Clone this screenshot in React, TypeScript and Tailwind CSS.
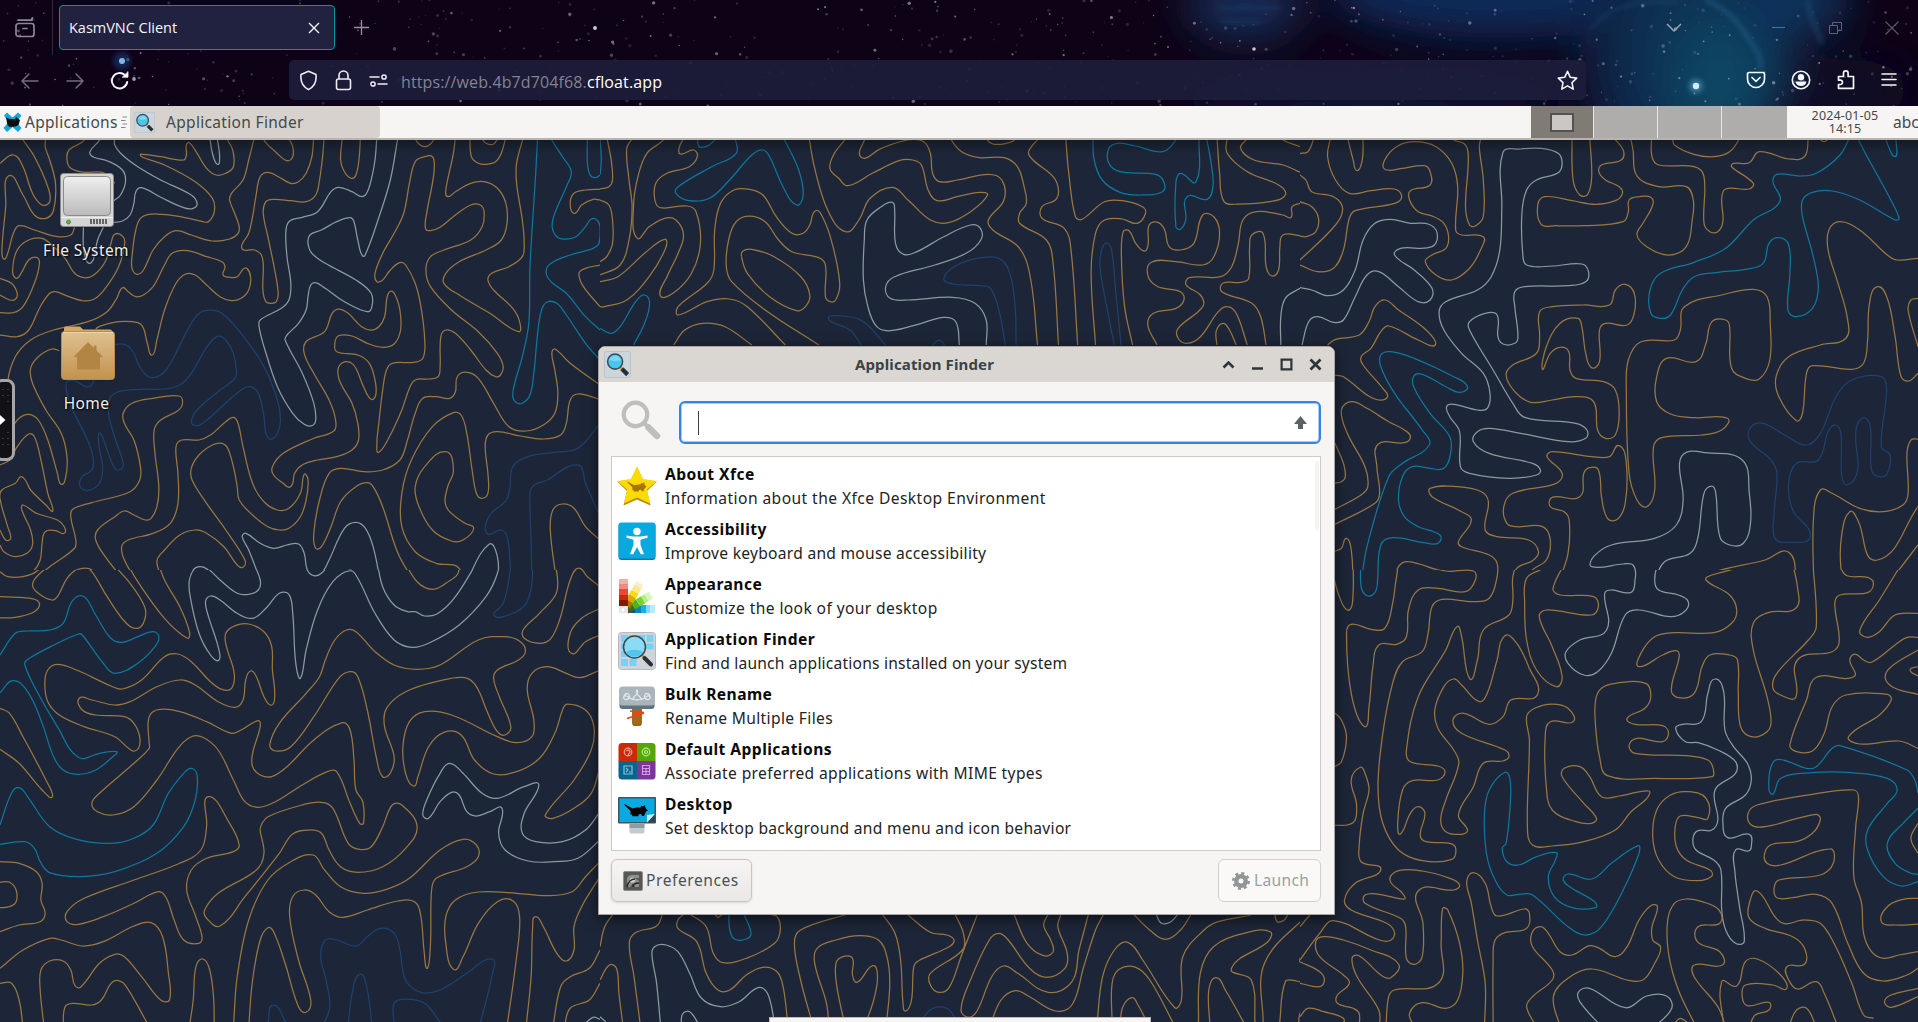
import React from "react";

type Tone = "o" | "c" | "w" | "b";
const tones: Record<Tone, string> = { o: "#9a7641", c: "#0f769d", w: "#8a9a9f", b: "#1d426e" };

type Region = {
  id: string;
  ox: number;
  oy: number;
  sx: number;
  clip: [number, number, number, number];
  lines: string[];
};

const topLeft: string[] = [
  "o 0,70 35,45 60,80 85,160 110,195 130,185 125,140 90,50 60,0 50,-20",
  "o 120,-10 118,20 130,60 145,130 140,210 120,235 90,225 60,165 22,108 15,200 5,330 10,357 20,340 35,280 50,257 90,270 150,290 185,285 195,262",
  "o 220,0 180,30 175,60 185,85 220,97 270,98 300,130",
  "w 260,0 235,35 245,52 280,62 320,90 328,125 315,165 298,182",
  "w 300,-10 300,15 320,45 360,80 420,120 500,165 515,190 505,205 480,203 420,172 370,143 355,155 350,190 340,225 320,243 298,247",
  "w 218,262 218,320 225,360 235,370 245,355 255,300 270,262",
  "o 0,518 35,518 60,500 90,430 103,370 95,352 75,360 55,400 42,415 33,390 45,330 75,300 110,295 140,320 170,355 195,400 220,413 245,405 275,365 290,310 300,283 320,288 326,310 310,380 275,445 245,478 215,482 180,470 145,455 130,460 105,500 75,570 45,590 0,585",
  "o 0,415 30,430 45,460 40,478 25,480 0,465",
  "o 0,905 15,860 20,725 40,650 80,600 140,570 230,545 280,515 305,475 320,443 335,455 355,470 375,465 400,440 430,375 450,340 490,332 540,350 580,365 588,380 583,405 600,412 620,410 635,388 645,385 655,410 650,450 630,475 605,482 575,470 540,435 510,405 485,402 460,430 430,510 410,600 398,645 385,610 375,565 360,548 310,545 265,557 250,566",
  "o 590,-10 608,30 610,80 590,100 565,105 540,85 515,40 495,8 487,15 487,45 480,60 420,50 368,42 370,50 430,75 510,125 555,175 560,215 545,245 530,245 480,232 410,222 370,232 355,270 345,350 345,385 358,403 375,390 400,330 430,290 460,272 500,285 555,303 600,297 622,280 625,260 615,225 600,180 605,160 635,120 650,60 665,-10",
  "w 548,-10 555,40 568,73 574,50 568,-5",
  "o 690,0 720,35 750,62 765,50 765,20 755,-5",
  "o 820,-10 815,50 800,100 780,125 760,130 730,112 700,97 680,110 670,160 660,230 650,280 632,325 665,330 683,345 688,380 687,450 695,485 710,490 722,485 727,460 718,390 700,290 688,220 695,185 715,178 760,182 800,185 825,165 835,120 843,50 847,-10",
  "o 895,-10 890,60 900,95 918,115 930,105 938,60 942,-10",
  "w 985,-10 980,60 970,120 958,160 945,170 920,155 885,142 865,155 830,215 790,232 755,245 747,280 750,350 760,430 755,480 735,505 680,540 677,560 690,620 725,740 765,820 795,853 815,857 825,840 820,790 790,700 745,600 750,585 780,550 800,510 805,470 812,435 825,428 850,445 900,485 960,515 972,500 970,460 930,420 850,370 815,340 805,310 810,285 840,270 880,245 915,233 925,245 935,300 948,348 960,330 985,250 1020,120 1040,-10",
  "oz 985,425 980,400 1000,340 1030,280 1055,220 1070,130 1085,65 1110,50 1130,50 1135,80 1130,130 1115,220 1112,265 1125,272 1150,262 1190,225 1230,195 1255,195 1265,215 1260,260 1230,300 1160,330 1125,350 1113,390 1125,440 1180,510 1250,575 1300,640 1315,680 1308,705 1295,710 1270,690 1230,630 1190,580 1165,570 1152,590 1150,680 1145,710 1120,717 1085,720 1070,745 1050,810 1020,885 990,937 985,910 990,850 1000,750 1010,690 1025,670 1080,667 1105,655 1110,600 1100,500 1085,430 1060,375 1045,368 1020,390 1000,420",
  "o 1085,-5 1095,12 1110,20 1125,12 1135,-5",
  "o 1190,-10 1185,40 1165,150 1170,170 1190,155 1230,130 1265,125 1300,145 1322,190 1325,250 1310,300 1270,330 1200,365 1165,400 1160,430 1200,465 1280,520 1355,575 1358,545 1340,505 1290,450 1275,420 1285,400 1330,380 1365,350 1370,310 1365,240 1350,130 1350,70 1368,-10",
  "o 1228,-10 1232,50 1250,70 1270,73 1295,65 1310,40 1322,-10",
  "o 1260,-5 1270,10 1290,12 1300,-5",
  "c 1405,-10 1400,100 1385,380 1382,550 1365,650 1345,730 1340,770 1350,788 1365,790 1385,765 1395,700 1405,580 1415,510 1430,486 1455,490 1480,525 1530,610 1568,660",
  "c 1440,-5 1470,50 1493,95 1480,140 1450,220 1443,260 1455,290 1475,297 1505,290 1530,260 1545,237 1560,240 1568,260 1565,310 1550,325 1490,345 1440,370 1427,395 1440,425 1480,460 1530,530 1568,570",
  "c 1535,-10 1535,70 1542,105 1555,113 1568,105",
  "o 1568,180 1550,178 1520,195 1500,220 1490,190 1500,160 1530,150 1568,148",
  "o 1568,375 1530,385 1513,400 1525,440 1568,500",
  "oz 800,605 795,640 820,700 860,780 877,840 873,872 820,895 740,940 712,980 715,1005 740,1030 755,1042 765,1030 770,1000 790,975 830,960 880,950 920,930 937,900 935,850 920,790 890,730 883,690 895,668 915,667 930,685 950,740 970,778 982,765 980,720 965,670 935,645 880,635 875,610 885,587 920,588 960,610 1000,622 1030,612 1047,570 1045,510 1035,470 1022,453 1012,470 1005,530 990,560 970,570 945,560 910,520 885,507 868,520 848,575",
  "b 300,613 325,613 345,630 365,680 385,708 405,712 430,695 455,650 490,570 520,520 550,510 580,520 630,580 690,680 725,780 733,840 725,880 708,898 695,880 690,830 675,760 655,740 630,750 570,810 530,850 510,857 500,845 515,810 570,755 610,720 618,700 610,640 590,600 572,588 555,600 530,640 500,700 470,735 430,747 370,748 310,755 285,780 285,830 305,910 322,970 315,988 300,985 280,930 262,880 258,910 268,980 262,1025 240,1048 220,1050 208,1035 215,1010 240,990 243,950 225,890 190,810 175,760 175,725 195,722 225,740 240,735 245,718",
  "o 155,632 135,627 100,650 80,685 85,730 120,810 160,880 175,950 172,1010 160,1033 150,1000 125,900 100,840 75,823 50,835 20,880 0,905",
  "o 0,975 25,960 45,920 75,882 90,890 105,950 125,1060 138,1112 120,1095 80,1050 57,1010 40,1030 5,1050 0,1075 20,1160 28,1195 15,1200 0,1170",
  "o 0,1300 45,1312 85,1295 105,1260 110,1210 118,1175 145,1172 168,1180 168,1160 150,1140 95,1120 60,1095 57,1110 80,1170 85,1215 70,1240 40,1250 10,1235 0,1215",
  "o 90,1320 130,1280 195,1225 198,1200 185,1130 190,1108 240,1088 340,1055 365,1020 367,980 350,900 325,850 322,820 345,790 400,775 468,768 477,790 465,812 420,840 403,870 405,940 415,1040 410,1100 395,1135 380,1140 350,1125 325,1113 300,1130 255,1170 250,1200 275,1250 330,1330",
  "o 360,1330 325,1260 318,1220 335,1200 400,1180 445,1150 465,1090 465,1000 460,920 475,900 520,900 550,885 590,845 610,832 622,850 635,920 660,1030 690,1085 725,1110 755,1105 785,1060 795,1003 805,1020 800,1080 785,1130 755,1165 730,1170 700,1160 660,1125 625,1080 620,1040 610,980 595,925 580,910 555,915 520,945 500,985 502,1020 540,1090 590,1170 640,1260 635,1282 620,1275 585,1220 540,1180 510,1170 470,1185 430,1230 410,1265 430,1330",
  "o 170,1330 185,1300 215,1285 240,1290 260,1330",
  "w 495,1330 505,1290 525,1280 550,1295 580,1330",
  "w 680,1320 650,1230 633,1190 643,1180 680,1210 715,1225 750,1215 780,1212 795,1240 803,1290 820,1308 840,1300 860,1260 900,1165 930,1147 955,1165 975,1220 995,1330",
  "o 1085,1330 1040,1240 1000,1100 975,1040 960,1028 930,1040 890,1085 865,1160 840,1220 825,1225 820,1180 835,1080 860,1000 890,985 950,995 1000,990 1045,960 1065,900 1085,820 1105,775 1140,770 1175,775 1190,755 1195,710 1220,697 1250,715 1290,790 1330,860 1375,873 1420,855 1450,820 1458,760 1450,690 1442,640 1450,627 1490,670 1568,735",
  "o 1180,1325 1200,1285 1140,1270 1085,1235 1050,1160 1050,1060 1075,960 1130,860 1185,818 1205,825 1220,880 1235,1000 1245,1060 1258,1075 1275,1060 1275,1000 1268,920 1275,885 1300,875 1360,888 1420,897 1465,885 1480,850 1490,780 1510,762 1568,778",
  "oz 1165,935 1110,980 1085,1040 1095,1100 1130,1170 1180,1203 1210,1200 1238,1165 1215,1150 1175,1115 1163,1085 1170,1040 1185,990",
  "b 1568,850 1510,925 1450,937 1380,950 1340,980 1332,1050 1320,1085 1280,1125 1272,1180 1310,1170 1325,1190 1332,1250 1335,1330",
  "b 1390,1330 1388,1200 1385,1090 1390,1042 1430,1020 1510,975 1530,1030 1568,1130",
  "o 1568,1200 1530,1160 1500,1105 1470,1092 1445,1110 1438,1170 1455,1330",
  "o 1495,1330 1510,1285 1540,1320",
  "w 1220,1320 1278,1213 1300,1250 1302,1330",
  "w 880,1320 915,1290 935,1320",
];

const bottomLeft: string[] = [
  "o 0,35 20,50 60,50 100,30 105,0 104,-20",
  "o 150,0 100,45 85,75 100,100 135,120 150,110 175,55 200,28 220,22 240,35 280,110 330,190 360,205 378,180 378,140 340,70 280,-5",
  "o 325,-5 360,65 430,175 490,235 495,215 470,140 430,60 408,-10",
  "o 0,110 60,113 95,120 103,137 85,158 40,172 0,174",
  "c 0,285 40,220 70,213 130,210 165,190 185,130 205,108 225,115 250,165 290,235 320,247 360,230 400,215 415,230 405,260 360,310 300,340 270,310 215,225 205,222 150,250 70,300 65,315 90,380 150,500 205,592 260,580 305,575 295,590 250,630 205,643 165,630 140,590 110,490 75,400 35,362 0,398",
  "o 0,445 25,460 60,530 120,660 137,710 110,690 50,610 0,568",
  "oz 125,330 117,370 125,425 155,465 220,500 300,530 345,572 362,565 365,530 350,490 325,470 250,465 215,450 207,415 240,420 300,435 340,425 410,380 470,360 510,375 570,425 615,442 635,420 642,360 655,333 670,350 690,410 710,435 718,400 712,330 710,260 690,215 650,192 615,197 590,220 592,260 612,340 605,385 580,388 550,365 500,305 465,282 430,290 370,360 320,387 290,378 200,330 150,313",
  "w 655,-10 680,60 675,90 650,103 620,100 575,60 535,20 510,25 495,60 497,110 520,220 550,285 572,300 570,260 545,170 537,125 550,108 575,120 620,160 660,175 695,145 730,100 755,103 765,160 772,300 782,355 790,340 800,270 830,150 870,65 915,32 935,55 980,160 1030,240 1075,262 1120,250 1200,195 1270,110 1300,40 1303,-10",
  "w 798,-5 803,30 820,47 840,40 868,0",
  "w 985,0 1000,80 1030,135 1065,155 1085,155 1110,168 1145,160 1190,110 1255,-10",
  "o 612,-5 635,22 642,-5",
  "o 1055,0 1090,65 1130,88 1165,70 1198,28 1150,18 1110,0",
  "b 1335,-5 1330,60 1315,130 1292,168 1340,160 1375,130 1390,70 1391,-5",
  "o 1450,-5 1455,95 1410,160 1367,210 1370,235 1410,250 1440,235 1465,170 1490,60 1512,25 1535,50 1568,80",
  "o 1568,145 1520,175 1490,220 1493,280 1530,245 1568,225",
  "oz 390,550 387,490 395,460 420,448 470,455 540,485 605,520 630,510 675,482 680,500 660,580 660,620 680,645 710,650 750,620 820,540 895,488 915,510 925,600 930,690 948,725 950,790 940,790 915,730 880,635 855,635 790,675 720,725 675,742 640,725 610,660 570,570 530,532 500,530 465,565 410,660 350,740 295,765 255,755 240,730 260,700 350,610 390,565",
  "oz 835,350 850,300 875,240 905,210 930,215 980,275 1030,315 1090,328 1150,315 1250,240 1320,230 1360,245 1373,275 1355,300 1300,330 1290,355 1305,410 1335,500 1320,525 1300,515 1275,460 1245,380 1215,353 1150,362 1060,395 1010,445 1005,500 1030,590 1020,640 1000,650 985,600 960,450 935,350 915,335 885,355 820,470 760,560 720,573 705,555 730,490 800,400",
  "o 1568,330 1515,353 1480,340 1430,320 1390,340 1378,390 1395,480 1390,530 1350,548 1300,530 1180,465 1110,455 1070,485 1053,560 1060,640 1080,678 1092,650 1120,560 1160,517 1205,525 1240,600 1290,642 1350,635 1410,595 1450,520 1470,450 1482,432 1530,450 1552,500 1545,570 1500,660 1425,765 1445,775 1500,745 1545,700 1568,620",
  "w 1568,755 1530,810 1470,845 1400,845 1365,820 1370,760 1408,675 1370,680 1300,715 1260,700 1210,640 1175,610 1150,640 1115,720 1105,765 1120,775 1150,725 1180,697 1200,705 1220,755 1245,768 1280,755 1312,745 1303,820 1320,870 1380,903 1450,905 1510,895 1568,840",
  "c 0,795 30,700 50,683 75,715 130,800 200,838 290,850 350,835 400,795 440,700 480,640 500,625 515,645 510,720 480,800 410,880 300,935 210,950 130,938 105,905 90,865 65,845 0,853",
  "oz 545,710 540,800 525,870 470,910 350,960 220,1015 175,1055 175,1085 205,1093 270,1070 350,1030 415,995 435,1015 455,1080 480,1140 520,1150 528,1130 510,1065 488,990 500,930 540,895 610,875 625,855 600,790",
  "o 0,905 50,910 95,935 110,970 107,1020 118,1060 105,1085 50,1095 0,1115",
  "o 0,967 25,967 42,990 42,1025 25,1040 0,1043",
  "o 0,1225 60,1170 130,1135 160,1140 215,1158 270,1145 350,1098 395,1088 425,1130 440,1240 443,1320 420,1320 370,1250 325,1190 300,1183 260,1210 210,1282 195,1275 185,1230 165,1203 130,1203 107,1230 105,1290 115,1400",
  "o 165,1400 170,1340 190,1330 240,1335 265,1320 290,1270 310,1262 330,1280 390,1400",
  "o 0,1270 30,1270 50,1320 60,1400",
  "o 495,1400 505,1320 512,1220 530,1197 548,1230 558,1310 560,1400",
  "oz 685,790 700,770 780,738 840,727 870,745 910,850 940,868 970,860 1000,800 1025,735 1050,735 1090,800 1060,865 1000,920 935,937 890,920 860,870 840,820 810,810 765,822 730,880 640,1010 575,1098 540,1075 535,1050 570,1000 670,930 690,880 680,810",
  "o 610,1400 620,1250 650,1080 700,960 760,905 818,885 845,925 890,980 950,1000 1010,988 1070,955 1150,870 1210,838 1245,855 1250,890 1220,920 1140,955 1128,990 1125,1150 1117,1225 1108,1170 1100,1070 1085,1027 1040,1023 960,1050 895,1072 860,1055 825,1005 795,990 765,1010 757,1070 780,1200 812,1320 800,1357 780,1340 745,1210 715,1115 700,1103 680,1140 660,1260 650,1400",
  "b 845,1395 862,1340 852,1260 838,1190 850,1140 880,1140 930,1158 960,1130 995,1105 1030,1120 1045,1170 1060,1260 1100,1297 1150,1290 1220,1240 1285,1197 1285,1250 1255,1390",
  "b 910,1390 922,1290 940,1243 958,1280 972,1390",
  "b 700,1390 715,1335 748,1390",
  "b 1030,1390 1030,1330 1060,1317 1110,1330 1152,1390",
  "o 1568,905 1530,950 1495,995 1430,1007 1350,1000 1250,996 1190,1020 1165,1070 1165,1150 1185,1228 1210,1190 1250,1090 1300,1025 1340,1022 1358,1070 1350,1190 1325,1400",
  "o 1375,1400 1388,1250 1392,1100 1400,1070 1420,1100 1455,1180 1480,1203 1500,1170 1500,1100 1520,1040 1568,950",
  "o 1445,1400 1465,1280 1490,1250 1540,1225 1568,1170",
  "o 1475,1400 1490,1345 1540,1320 1568,1270",
  "w 1530,1390 1550,1372 1568,1378",
];

const topMiddle: string[] = [
  "c 0,-5 3,60 0,105",
  "o 15,-10 25,60 28,120 20,140 0,147",
  "o 0,180 20,195 28,240 28,310 15,350 0,365",
  "o 75,-10 60,25 65,120 72,200 65,300 45,375 0,405",
  "o 145,-5 105,40 85,110 75,200 82,293 110,260 145,235 170,240 187,285 175,340 150,410 135,467 165,458 205,400 225,310 215,215 195,198 135,203 123,180 125,130 150,100 200,80 218,50 210,30 180,42 178,20 190,-10",
  "o 0,425 40,410 100,340 145,298 147,325 110,410 60,480 10,500 0,500",
  "c 218,-10 225,22 260,-5",
  "c 302,-10 305,40 250,80 175,140 170,160 200,182 245,175 290,120 340,45 365,30 380,50 410,140 440,195 455,165 445,90 410,-10",
  "c 0,565 25,580 45,560 80,485 100,465 111,490 100,550 75,615",
  "o 165,615 190,570 230,550 280,560 340,615",
  "o 415,615 330,500 290,477 240,485 175,525 175,500 240,430 255,390 257,270 270,190 300,150 335,148 365,165 395,230 430,280 455,280 470,255 483,212 500,235 520,310 537,430 528,480 515,485 505,470 505,375 490,353 430,335 400,300 370,245 335,228 305,245 288,300 283,380 295,425 370,510 490,615",
  "oz 317,350 330,400 380,470 440,512 460,500 470,465 450,410 390,350 340,328 320,333",
  "o 468,-10 480,80 510,210 550,275 580,240 605,175 655,142 690,180 740,240 780,248 830,215 868,165 850,157 800,170 755,182 735,150 720,75 700,60 670,62 610,100 555,137 535,115 515,85 525,40 550,-5",
  "o 595,-10 585,52 630,25 690,0 725,5 740,40 745,100 760,125 800,120 870,103 900,120 905,180 870,240 880,270 940,325 965,420 980,615",
  "o 785,-5 810,35 850,53 905,53 935,80 950,140 955,190 940,220 940,250 1000,300 1015,370 1027,615",
  "o 865,-5 880,12 910,10 930,-3",
  "o 985,-10 960,35 970,60 1015,110 1027,150 1020,180 990,200 990,235 1040,265 1055,330 1070,615",
  "o 1043,-10 1050,100 1065,230 1080,238 1130,185 1170,182 1215,200 1222,220 1203,250 1170,237 1130,240 1110,280 1100,400 1110,615",
  "o 1193,615 1175,500 1168,350 1172,275 1185,272 1200,310 1220,333 1228,310 1230,255 1250,247 1265,270 1275,320 1300,330 1330,310 1350,225 1375,230 1388,280 1375,350 1350,375 1290,365 1235,367 1228,410 1250,440 1300,455 1308,480 1290,505 1240,520 1227,555 1248,615",
  "b 1152,615 1135,500 1120,380 1125,325 1137,310 1147,340 1155,450 1167,615",
  "b 908,615 895,520 875,445 850,437 790,432 770,415 800,375 860,352 900,360 920,410 930,500 932,615",
  "b 585,615 560,570 512,538 545,528 590,545 640,615",
  "b 745,615 760,600 772,615",
  "w 805,615 797,545 770,532 720,550 650,572 620,560 600,500 590,420 592,300 598,240 630,200 655,187 660,210 662,310 680,343 710,335 770,290 830,255 852,265 853,300 820,340 750,375 660,410 640,440 650,475 690,480 790,472 840,490 865,540 865,615",
  "c 1104,-10 1107,60 1125,120 1165,157 1210,165 1260,155 1263,125 1245,103 1165,95 1140,70 1140,25 1160,10 1200,18 1260,35 1290,-2",
  "c 1342,-10 1335,125 1300,100 1290,130 1290,260 1300,268 1312,240 1315,170 1360,178 1373,140 1370,80 1358,-10",
  "o 1382,-10 1388,100 1398,185 1430,192 1500,185 1535,165 1520,135 1450,95 1405,40 1405,-10",
  "o 1450,-5 1435,25 1465,60 1530,75 1568,97",
  "o 1520,-10 1568,20",
  "o 1568,190 1550,200 1548,232 1530,225 1470,215 1440,240 1430,310 1415,380 1390,410 1320,413 1313,435 1345,465 1350,500 1295,565 1295,595 1315,610 1345,590 1385,515 1405,500 1425,520 1450,615",
  "o 1568,287 1530,285 1523,320 1520,390 1505,408 1492,380 1485,280 1460,285 1455,320 1453,415 1435,427 1395,430 1393,455 1460,490 1480,530 1492,615",
  "o 1382,615 1380,575 1395,550 1410,570 1425,615",
  "w 1568,445 1535,475 1525,530 1525,615",
];

const topRight: string[] = [
  "o 0,40 20,35 35,-5",
  "o 78,-10 70,50 90,120 125,160 180,152 240,147 258,170 240,190 140,212 125,235 110,330 85,385 45,395 0,375",
  "o 120,-10 135,60 145,92 158,60 160,-10",
  "o 0,105 15,120 30,155 85,170 108,205 90,255 0,360",
  "o 0,185 30,200 47,235 40,275 15,290 0,288",
  "oz 215,88 215,60 245,20 290,5 345,20 385,70 400,140 395,270 410,285 465,290 460,325 430,385 385,420 345,405 318,365 335,345 370,325 377,290 365,250 340,230 300,215 278,180 280,152 330,135 330,95 315,77 260,85",
  "o 385,-5 420,15 427,60 420,200 430,255 445,258 465,230 465,120 455,20 460,-10",
  "wz 515,37 512,200 507,330 485,410 450,450 370,485 353,515 365,570 410,640 465,700 482,760 475,805 450,810 390,793 372,800 380,830 405,875 407,980 430,1000 530,1015 600,1005 610,990 590,970 480,940 440,905 450,875 480,865 560,880 680,905 725,895 728,870 700,850 570,832 540,790 490,690 430,570 430,545 470,520 500,525 502,590 515,612 545,610 553,590 545,500 545,455 570,440 680,437 725,425 732,395 715,372 640,378 575,375 565,340 563,220 575,150 600,120 655,98 665,70 655,40 610,25 560,27",
  "w 0,443 30,450 70,467 110,450 140,390 160,300 190,250 230,238 280,250 325,252 348,280 335,320 255,325 240,345 290,390 335,445 330,480 300,485 250,440 200,395 170,405 140,470 110,540 85,547 45,530 22,545 5,615",
  "o 70,615 90,598 150,585 175,545 190,500 215,480 250,510 320,570 343,615 300,600 225,558 205,575 180,625 155,650 160,675 210,745 222,770 200,780 170,765 110,710 85,705",
  "o 85,900 110,970 115,1010 105,1025 85,1030",
  "o 85,1110 155,1065 172,1040 165,980 120,880 105,810 130,785 170,805 225,845 265,870 280,890 265,908 198,913 195,980 202,1060 190,1090 85,1155",
  "c 155,1330 170,1220 225,1010 260,970 328,915 310,870 240,760 205,680 205,645 230,635 290,655 390,710 425,740 405,757 370,740 310,703 288,710 290,745 330,820 380,890 382,940 365,985 330,985 285,980 260,1010 250,1080 265,1130 300,1160 355,1185 350,1210 310,1207 235,1193 205,1215 197,1330",
  "o 85,1235 105,1225 118,1195 130,1230 135,1330",
  "o 690,-10 693,120 710,165 730,163 740,110 735,-10",
  "o 795,-10 820,30 815,60 765,75 758,95 775,120 810,140 818,160 800,182 750,193 690,182 620,170 603,195 612,253 650,257 720,257 820,245 833,215 835,180 860,170 890,172 895,195 870,250 855,285 880,320 935,345 980,320 995,240 998,180 980,140 910,140 855,108 845,30 838,-10",
  "o 892,-10 893,50 910,75 1000,80 1025,110 1025,250 1040,275 1060,275 1073,245 1070,175 1080,147 1140,147 1150,130 1095,80 1100,70 1140,68 1165,35 1240,57 1280,50 1290,-10",
  "o 945,-10 950,15 1000,43 1050,50 1090,35 1115,-5",
  "c 1395,-10 1370,45 1310,100 1270,108 1210,103 1200,125 1217,185 1150,240 1080,325 1000,367 915,400 888,450 890,520 915,535 940,525 970,450 1000,410 1060,397 1130,388 1175,370 1190,310 1215,293 1240,315 1243,400 1238,510 1258,530 1300,505 1315,440 1300,340 1275,230 1275,180 1300,157 1350,153 1420,180 1510,240 1520,235 1490,160 1415,-5",
  "c 1485,-5 1510,50 1512,-10",
  "o 1320,-3 1330,5 1340,-5",
  "o 1568,355 1515,360 1490,345 1420,270 1370,245 1342,270 1340,330 1365,430 1388,530 1385,595 1320,615 1240,650 1208,710 1215,770 1260,842 1275,820 1285,700 1300,677 1400,688 1430,670 1440,600 1445,490 1465,440 1490,475 1510,590 1525,710 1545,723 1568,700",
  "o 1568,475 1550,480 1543,510 1568,620",
  "oz 615,688 625,620 660,550 705,535 715,560 725,640 740,683 760,665 760,570 775,550 830,555 848,520 848,460 825,433 800,450 785,495 720,495 640,500 608,515 608,590 600,640 540,675 523,705 545,755 585,787 640,780 700,770 745,785 755,870 775,895 800,885 810,820 800,750 770,725 700,715 685,690 682,635 660,622 635,640",
  "oz 835,1000 828,750 833,660 865,605 950,600 965,570 975,500 1070,465 1150,448 1185,470 1193,550 1192,660 1165,717 1130,715 1095,685 1090,560 1080,540 1045,545 1030,610 1005,665 930,655 905,710 905,785 940,822 1000,833 1085,835 1070,870 1020,885 920,892 897,920 900,1050 880,1100 855,1080",
  "o 655,1330 680,1240 683,1140 670,1115 635,1100 640,1072 710,1070 720,1000 735,983 757,990 765,1070 780,1135 805,1138 825,1090 828,970 810,917 785,950 740,950 640,935 627,950 665,1000 650,1030 540,1060 517,1100 525,1150 550,1160 615,1160 635,1200 625,1260 590,1290 575,1330",
  "o 240,1330 250,1280 275,1265 370,1295 435,1292 445,1320",
  "o 500,1330 500,1270 480,1245 410,1220 402,1205 435,1140 410,1115 335,1070 330,1045 400,1040 460,1055 478,1085 470,1170 500,1190 580,1200 605,1235 590,1262 550,1285 540,1330",
  "w 855,1320 845,1275 820,1272 740,1280 745,1250 790,1215 900,1195 955,1155 972,1080 963,970 980,937 1030,938 1122,960 1140,1060 1143,1150 1125,1210 1090,1215 1065,1190 1055,1060 1045,1038 1025,1060 1010,1190 990,1240 925,1265 900,1320",
  "bz 1140,900 1145,860 1175,850 1230,885 1285,915 1320,880 1360,770 1400,720 1475,710 1488,750 1475,920 1497,945 1490,1000 1470,1010 1450,990 1448,870 1435,835 1415,850 1410,900 1415,990 1390,1035 1375,1010 1372,880 1358,855 1340,875 1315,960 1260,970 1240,1030 1250,1110 1295,1190 1240,1207 1205,1195 1203,1120 1210,1000 1195,960",
  "o 1303,1330 1303,1130 1320,1050 1350,1060 1420,1105 1480,1115 1530,1095 1543,1060 1540,940 1550,900 1568,897",
  "o 1030,1320 1040,1300 1180,1260 1240,1237 1260,1330",
  "o 1455,1320 1440,1310 1385,1310 1372,1280 1375,1180 1395,1115 1415,1140 1465,1260 1568,1100",
  "o 1500,1320 1568,1215",
];

const bottomRight: string[] = [
  "o 85,50 100,110 120,150 133,130 135,-10",
  "c 155,-10 155,80 170,107 190,98 197,60 198,-10",
  "o 85,455 105,480 118,530 105,605 85,622",
  "oz 245,50 235,130 215,205 180,208 130,193 118,220 130,400 162,498 175,440 185,320 200,255 245,253 270,230 275,150 300,90 350,85 420,95 445,60 440,33 370,33 285,5 255,10",
  "o 502,-10 500,50 480,115 440,125 360,118 335,140 325,220 310,275 260,305 235,370 210,520 198,680 210,790 250,870 310,902 385,898 395,865 380,850 320,845 305,825 317,760 300,740 280,760 255,822 248,790 260,690 285,662 350,660 368,635 350,618 280,605 270,570 300,410 370,270 398,200 410,230 430,355 450,300 465,210 530,165 540,120 540,50 555,10 580,0",
  "o 632,-5 615,25 575,55 570,130 575,240 600,330 650,380 665,350 640,260 607,170 625,150 740,165 757,140 745,110 660,105 642,85 682,-10",
  "oz 350,505 342,450 365,380 390,357 410,375 455,425 475,400 500,300 520,227 550,250 580,320 602,405 535,420 515,470 480,493 415,460 388,480 410,520 520,570 530,590 515,603 465,610 440,680 402,765 425,810 410,823 370,815 357,780 370,720 403,610 390,570",
  "oz 575,470 595,445 640,432 680,445 693,485 635,485 622,530 625,680 640,750 700,785 740,790 752,775 720,730 665,650 670,625 710,620 735,650 765,710 810,708 885,693 880,715 840,755 800,810 720,845 640,858 590,855 577,800 582,540",
  "w 740,0 738,22 820,10 848,25 850,60 840,97 790,90 773,100 778,210 710,240 675,275 680,310 720,345 755,335 790,280 825,165 860,150 940,170 975,155 985,125 960,105 910,90 900,60 910,15 945,0",
  "oz 750,420 765,385 800,370 877,370 890,410 875,445 830,475 850,493 920,497 935,520 920,545 855,535 835,555 850,580 980,587 1035,600 1048,625 1045,650 900,655 780,647 760,590 750,500",
  "o 1245,-10 1262,80 1258,145 1190,157 1150,190 1150,270 1185,410 1195,490 1180,520 1145,530 1118,500 1112,400 1110,300 1090,285 1040,285 1020,320 1000,400 960,413 942,390 962,290 955,272 920,285 860,320 865,280 900,230 950,218 1050,218 1095,190 1108,150 1090,105 1030,60 1045,45 1200,0",
  "o 1300,-10 1310,200 1290,240 1210,340 1200,385 1225,408 1258,412 1262,300 1350,275 1368,245 1357,130 1370,105 1440,98 1455,70 1440,52 1390,48 1375,30 1372,-10",
  "o 1535,-5 1470,120 1420,212 1440,232 1470,215 1510,165 1568,160",
  "o 1568,232 1540,232 1510,255 1450,307 1430,300 1408,282 1395,300 1405,350 1310,352 1285,420 1243,555 1260,575 1300,573 1330,520 1350,440 1385,405 1490,403 1500,420 1470,465 1392,530 1420,552 1520,543 1568,565",
  "o 1568,270 1500,320 1485,355 1510,385 1568,403",
  "o 1568,320 1548,330 1568,348",
  "wz 1053,357 1075,395 1078,510 1100,560 1135,610 1145,660 1130,705 1080,745 1073,790 1085,833 1140,823 1145,860 1138,873 1105,870 1103,930 1115,1040 1127,1145 1105,1150 1080,1110 1070,1050 1068,930 1050,900 1005,870 997,835 1010,812 1045,810 1060,780 1053,690 1105,640 1105,605 1060,570 1010,548 978,545 953,505 970,493 1018,485 1035,400",
  "cz 520,637 533,660 533,740 523,850 513,865 525,905 555,915 600,890 650,878 648,900 630,950 645,1010 690,1043 750,1043 748,1025 690,985 668,960 680,942 740,957 790,910 858,857 860,880 820,990 765,1100 725,1125 680,1100 590,1005 560,1002 525,1005 495,960 473,880 468,760 480,690",
  "oz 1030,715 1035,775 1010,773 965,768 952,800 955,860 980,900 1040,930 1045,948 1010,962 950,950 910,900 895,830 905,750 940,705 985,695",
  "c 1568,700 1560,660 1540,630 1370,557 1350,565 1310,620 1285,625 1215,598 1195,620 1190,690 1200,702 1220,655 1300,638 1400,638 1490,655 1515,690 1490,730 1440,810 1440,870 1480,950 1525,978 1568,965",
  "c 1568,745 1530,790 1490,850 1510,910 1550,940 1568,943",
  "o 1568,790 1550,835 1568,880",
  "o 1568,1225 1540,1245 1480,1263 1430,1240 1390,1150 1350,1030 1310,1003 1250,1013 1210,1013 1203,985 1215,960 1320,945 1353,910 1345,867 1220,915 1185,910 1180,875 1200,852 1260,845 1300,820 1320,780 1310,763 1180,800 1145,795 1137,760 1160,735 1300,703 1405,690 1417,710 1410,800 1405,950 1425,1030 1430,1120 1450,1175 1480,1195 1520,1185 1568,1175",
  "o 1568,1015 1530,1018 1490,1040 1475,1085 1510,1095 1568,1092",
  "o 1455,1375 1430,1365 1400,1270 1355,1150 1320,1090 1280,1080 1220,1087 1160,993 1140,1030 1140,1075 1180,1105 1250,1130 1280,1165 1280,1213 1235,1220 1240,1260 1262,1287 1310,1265 1330,1300 1365,1400",
  "o 1568,1285 1500,1305 1483,1325 1500,1342 1568,1310",
  "o 1140,1400 1155,1365 1190,1350 1190,1327 1135,1337 1122,1310 1130,1275 1200,1275 1235,1285 1215,1240 1160,1197 1130,1205 1108,1278 1070,1265 1075,1400",
  "o 1240,1400 1260,1350 1285,1345 1310,1400",
  "o 1005,1400 960,1290 935,1180 933,1080 950,1030 980,1017 1020,1025 1063,1050 1065,1090 1010,1100 1008,1145 1065,1175 1072,1215 1000,1215 1000,1250 1060,1340 1080,1400",
  "o 600,1400 575,1340 590,1310 640,1260 640,1230 590,1160 588,1120 610,1100 630,1120 660,1175 690,1185 735,1157 760,1165 800,1190 830,1160 860,1080 890,1037 907,1040 893,1100 895,1140 915,1162 900,1210 870,1260 830,1260 740,1227 680,1255 643,1310 660,1400",
  "w 765,1400 710,1325 707,1295 735,1285 825,1343 880,1308 930,1308 943,1345 900,1400",
  "o 950,1390 965,1375 985,1390",
  "oz 405,975 390,990 300,993 312,1090 310,1190 290,1213 270,1195 268,1100 255,1075 165,1030 165,1005 200,1003 265,1017 260,1000 228,960 250,932 310,933 380,955",
  "o 0,1200 50,1120 85,1082 190,1135 225,1143 240,1120 220,1090 130,1050 113,1020 140,970 205,930 155,905 150,860 160,760 175,690 165,640 153,622 130,660 143,730 140,780 120,795 85,795",
  "o 490,1400 490,1200 495,1140 520,1118 575,1105 582,1060 570,1047 500,1068 485,1040 470,970 440,938 423,965 435,1030 450,1140 470,1270 468,1400",
  "o 290,1400 278,1360 310,1328 370,1345 400,1320 413,1240 405,1150 375,1050 362,1045 358,1150 352,1268 240,1290 225,1310 218,1400",
  "o 150,1400 150,1360 135,1345 95,1330 95,1305 125,1270 110,1245 50,1190 40,1145 60,1130 110,1140 180,1170 250,1212 230,1253 205,1245 150,1187 132,1195 145,1250 200,1350 202,1400",
  "o 0,1205 50,1235 62,1260 50,1280 0,1270",
  "o 0,1370 20,1345 60,1355 110,1375 110,1400",
  "o 0,1100 25,1065",
];

const bottomMiddle: string[] = [
  "o 32,35 10,80 0,140",
  "o 0,240 20,195 35,205 40,280 48,370",
  "o 85,370 72,230 62,130 75,98 120,78 133,40",
  "w 128,370 120,250 110,160 118,138 140,135 165,155 190,220 215,295 255,320 295,305 335,263 355,280 370,370",
  "w 172,370 175,342 190,335 208,370",
  "w 0,350 12,365",
  "o 398,370 388,260 375,215 345,202 310,225 275,270 250,270 225,220 205,125 165,85 165,60 178,42",
  "o 190,42 225,80 240,160 260,188 310,175 370,130 382,90 375,50 355,42",
  "o 243,42 250,52 260,42",
  "c 273,42 275,90 285,117 310,117 320,100 305,42",
  "o 450,370 425,240 412,130 425,90 525,42",
  "o 485,370 480,310 455,190 460,145 500,120 550,107 590,120 608,170 614,250 607,370",
  "o 518,370 502,260 500,190 515,170 535,175 535,225 545,247 578,197 588,230 580,300 563,370",
  "o 598,42 625,100 637,180 642,310 648,333 660,300 665,200 675,182 740,140 750,120 735,105 700,97 650,42",
  "o 752,42 770,100 768,150 700,220 700,255 718,277 740,262 765,170 800,42",
  "o 828,370 850,300 880,272 910,290 965,333 1000,315 1025,200 1050,90 1067,42",
  "o 1035,42 1015,150 1000,245 950,277 885,220 855,198 830,230 800,330 782,352 765,330 785,240 825,120 845,100 865,120 910,205 945,232 985,205 990,160 970,80 977,42",
  "o 877,42 905,130 940,167 960,155 955,120 940,75 950,42",
  "b 685,352 705,325 735,325 752,352",
  "o 1053,370 1065,230 1090,150 1118,127 1150,180 1218,323 1232,300 1235,170 1280,90 1310,65 1380,45",
  "o 1085,370 1085,250 1100,208 1135,202 1165,240 1215,370",
  "o 1102,370 1108,320 1127,293 1140,315 1160,370",
  "w 1178,42 1190,70 1210,65 1225,42",
  "o 1130,42 1165,90 1198,118 1230,90 1253,42",
  "o 1268,370 1272,220 1300,140 1370,98 1420,95 1415,125 1338,205 1380,240 1388,370",
  "o 1292,370 1290,270 1305,233 1325,270 1365,370",
  "o 1430,42 1435,65 1450,60 1458,42",
  "o 1405,370 1408,190 1500,42",
  "o 1440,370 1452,245 1475,243 1520,260 1535,240 1520,205 1483,178 1550,62 1568,70",
  "o 1480,370 1485,335 1505,325 1568,352",
];

const regions: Region[] = [
  { id: "tl", ox: 0, oy: 140, sx: 600 / 1568, clip: [0, 100, 600, 470], lines: topLeft },
  { id: "bl", ox: 0, oy: 560, sx: 600 / 1568, clip: [0, 570, 600, 460], lines: bottomLeft },
  { id: "tm", ox: 600, oy: 140, sx: 700 / 1568, clip: [600, 100, 700, 260], lines: topMiddle },
  { id: "tr", ox: 1300, oy: 140, sx: 618 / 1568, clip: [1300, 100, 620, 470], lines: topRight },
  { id: "br", ox: 1300, oy: 560, sx: 618 / 1568, clip: [1300, 570, 620, 460], lines: bottomRight },
  { id: "bm", ox: 600, oy: 900, sx: 740 / 1568, clip: [600, 900, 700, 130], lines: bottomMiddle },
];

/** Turns a list of points into a smooth curve; ends at the top edge run on under the panel. */
function curve(points: number[][], closed: boolean, r: Region): string {
  let pts = points;
  if (!closed && r.oy === 140) {
    const grow = (a: number[], b: number[]) => {
      const dx = Math.max(-25, Math.min(25, ((a[0] - b[0]) / Math.max(1, b[1] - a[1])) * 75));
      return [a[0] + dx, -85];
    };
    const first = pts[0];
    const last = pts[pts.length - 1];
    if (first[1] <= 0) pts = [grow(first, pts[1]), ...pts];
    if (last[1] <= 0) pts = [...pts, grow(last, pts[pts.length - 2])];
  }
  const p = pts.map(([x, y]) => [r.ox + x * r.sx, r.oy + y / 3]);
  const n = p.length;
  const at = (i: number) => (closed ? p[(i + n) % n] : p[Math.max(0, Math.min(n - 1, i))]);
  let d = `M${p[0][0].toFixed(1)} ${p[0][1].toFixed(1)}`;
  for (let i = 0; i < (closed ? n : n - 1); i++) {
    const [a, b, c, e] = [at(i - 1), at(i), at(i + 1), at(i + 2)];
    const len = Math.hypot(c[0] - b[0], c[1] - b[1]);
    const t1 = Math.hypot(c[0] - a[0], c[1] - a[1]) || 1;
    const t2 = Math.hypot(e[0] - b[0], e[1] - b[1]) || 1;
    const k1 = Math.min(0.36 * len / t1, 0.36);
    const k2 = Math.min(0.36 * len / t2, 0.36);
    d += `C${(b[0] + (c[0] - a[0]) * k1).toFixed(1)} ${(b[1] + (c[1] - a[1]) * k1).toFixed(1)} ${(c[0] - (e[0] - b[0]) * k2).toFixed(1)} ${(c[1] - (e[1] - b[1]) * k2).toFixed(1)} ${c[0].toFixed(1)} ${c[1].toFixed(1)}`;
  }
  return d;
}

function Wallpaper() {
  return (
    <svg className="absolute left-0 top-0 h-full w-full" viewBox="0 140 1918 882" fill="none" strokeWidth="1.25">
      <defs>
        {regions.map((r) => (
          <clipPath key={r.id} id={r.id}>
            <rect x={r.clip[0]} y={r.clip[1]} width={r.clip[2]} height={r.clip[3]} />
          </clipPath>
        ))}
        <linearGradient id="panelShade" x1="0" y1="0" x2="0" y2="1">
          <stop offset="0" stopColor="#000" stopOpacity=".32" />
          <stop offset="1" stopColor="#000" stopOpacity="0" />
        </linearGradient>
      </defs>
      {regions.map((r) => (
        <g key={r.id} clipPath={`url(#${r.id})`}>
          {r.lines.map((line, i) => {
            const [head, ...rest] = line.split(" ");
            const points = rest.map((s) => s.split(",").map(Number));
            return <path key={i} d={curve(points, head[1] === "z", r)} stroke={tones[head[0] as Tone]} />;
          })}
        </g>
      ))}
      <rect x="0" y="140" width="1918" height="14" fill="url(#panelShade)" />
    </svg>
  );
}

const stars = Array.from({ length: 620 }, (_, i) => {
  const h = (k: number) => {
    const v = Math.sin(i * 127.1 + k * 311.7) * 43758.5453;
    return v - Math.floor(v);
  };
  return { x: h(1) * 1918, y: h(2) * 106, r: 0.7 + h(3) * h(3) * 1.1, o: 0.14 + h(4) * h(4) * 0.5 };
});

function Sky() {
  return (
    <svg className="absolute inset-0 h-full w-full" viewBox="0 0 1918 106" preserveAspectRatio="none">
      <defs>
        <filter id="soft" filterUnits="userSpaceOnUse" x="900" y="-120" width="1120" height="350">
          <feGaussianBlur stdDeviation="20" />
        </filter>
        <filter id="softer" filterUnits="userSpaceOnUse" x="0" y="-30" width="1918" height="170">
          <feGaussianBlur stdDeviation="2.5" />
        </filter>
      </defs>
      <rect width="1918" height="106" fill="#0e0216" />
      <g filter="url(#soft)">
        <ellipse cx="1245" cy="6" rx="60" ry="36" fill="#122c52" />
        <ellipse cx="1500" cy="-8" rx="170" ry="46" fill="#0f2a58" />
        <ellipse cx="1370" cy="110" rx="190" ry="26" fill="#0a1436" />
        <ellipse cx="1640" cy="50" rx="60" ry="110" fill="#0a2244" />
        <ellipse cx="1710" cy="50" rx="85" ry="110" fill="#0b3352" />
        <ellipse cx="1720" cy="80" rx="46" ry="60" fill="#0f4562" />
        <ellipse cx="1790" cy="0" rx="60" ry="40" fill="#10305a" />
        <ellipse cx="1850" cy="90" rx="60" ry="30" fill="#0c0c28" />
      </g>
      <g filter="url(#softer)" fill="none" stroke="#2d6a98" strokeOpacity=".6">
        <path d="M1705 0C1735 12 1742 30 1752 44s10 18 8 26" strokeWidth="3" />
        <path d="M1808 0c0 16 8 26 14 44" strokeWidth="4" strokeOpacity=".35" />
        <path d="M1590 30c20-26 50-30 90-28" strokeWidth="3" strokeOpacity=".25" />
        <path d="M1218 8h62M1220 22h40" strokeWidth="4" strokeOpacity=".2" />
      </g>
      {stars.map((s, i) => (
        <circle key={i} cx={s.x} cy={s.y} r={s.r} fill="#c4bcd8" opacity={s.o} />
      ))}
      <circle cx="122" cy="61" r="9" fill="#1d4f9b" opacity=".45" filter="url(#softer)" />
      <circle cx="122" cy="61" r="3" fill="#86b4e4" />
      <circle cx="134" cy="79" r="1.9" fill="#9a98b8" />
      <circle cx="1696" cy="86" r="7" fill="#4c8fb4" opacity=".7" filter="url(#softer)" />
      <circle cx="1696" cy="86" r="3.2" fill="#d4ecf6" />
      <circle cx="595" cy="28" r="1.9" fill="#d0ccde" />
      <circle cx="1254" cy="49" r="1.8" fill="#c8c4dc" />
    </svg>
  );
}

function Browser() {
  return (
    <header className="relative h-[106px] shrink-0 overflow-hidden bg-[#0e0216] text-[#f5f4fb]">
      <Sky />
      <div className="relative flex h-[55px] items-center">
        <div className="flex h-full w-[53px] items-center justify-center border-r border-[#302a3c] pr-[6px]">
          <svg className="ml-1 h-[22px] w-[22px] -translate-y-px" viewBox="0 0 22 22" fill="none" stroke="#8e8797" strokeWidth="1.7" strokeLinecap="round">
            <path d="M4 4.200h14M17 4.200l1.500-2.400" />
            <rect x="2" y="7.500" width="18" height="13" rx="2.500" />
            <path d="M9 12.500h4" />
          </svg>
        </div>
        <div className="ml-[6px] flex h-[45px] w-[276px] items-center justify-between rounded border border-[#07979b] bg-[#20223f] pl-[9px] pr-[14px]">
          <span className="pt-px font-['Open_Sans','Noto_Sans',sans-serif] text-[14.500px] tracking-[-0.020px]">KasmVNC Client</span>
          <svg className="h-3 w-3" viewBox="0 0 12 12" stroke="#f4f4fa" strokeWidth="1.400">
            <path d="M1 1l10 10M11 1L1 11" />
          </svg>
        </div>
        <svg className="ml-[19px] h-[15px] w-[15px]" viewBox="0 0 15 15" stroke="#98919f" strokeWidth="1.300">
          <path d="M7.500 0v15M0 7.500h15" />
        </svg>
        <div className="ml-auto flex items-center pr-[19px]">
          <svg className="mr-[90px] h-[9px] w-[16px]" viewBox="0 0 16 9" fill="none" stroke="#9aa3b3" strokeWidth="1.500">
            <path d="M1 1l7 7 7-7" />
          </svg>
          <svg className="mr-[44px] h-3 w-[13px]" viewBox="0 0 13 12" stroke="#626d7b">
            <path d="M0 5.500h13" />
          </svg>
          <svg className="mr-[43px] h-3 w-[13px]" viewBox="0 0 13 12" fill="none" stroke="#5d6273">
            <path d="M.5 3.500h8v8h-8zM3.500 3.500v-3h9v8h-4" />
          </svg>
          <svg className="h-[14px] w-[14px]" viewBox="0 0 14 14" stroke="#5f586c" strokeWidth="1.100">
            <path d="M.5.5l13 13M13.500.5l-13 13" />
          </svg>
        </div>
      </div>
      <div className="relative flex h-[51px] items-center">
        <svg className="ml-[21px] h-4 w-[18px]" viewBox="0 0 18 16" fill="none" stroke="#746c7d" strokeWidth="1.500" strokeLinecap="round" strokeLinejoin="round">
          <path d="M17 8H1M8 1L1 8l7 7" />
        </svg>
        <svg className="ml-[27px] h-4 w-[18px]" viewBox="0 0 18 16" fill="none" stroke="#746c7d" strokeWidth="1.500" strokeLinecap="round" strokeLinejoin="round">
          <path d="M1 8h16M10 1l7 7-7 7" />
        </svg>
        <svg className="ml-[26px] h-[19px] w-[20px]" viewBox="0 0 20 19" fill="none" stroke="#f8f7fd" strokeWidth="1.900" strokeLinecap="round">
          <path d="M17.200 11A7.700 7.700 0 1 1 14.800 4" />
          <path d="M12.600 6.200H18V1z" fill="#f8f7fd" strokeWidth=".8" strokeLinejoin="round" />
        </svg>
        <div className="ml-[159px] mb-px flex h-[40px] w-[1297px] items-center rounded-[5px] bg-[#1d1e3c]/90 pl-[10px] pr-[8px]">
          <svg className="h-[21px] w-[19px]" viewBox="0 0 19 21" fill="none" stroke="#eeedf6" strokeWidth="1.600" strokeLinejoin="round">
            <path d="M9.500 1.200L17 4.600c.7 6.400-1.500 12-7.500 15-6-3-8.200-8.600-7.500-15z" />
          </svg>
          <svg className="ml-[17px] h-[21px] w-[17px]" viewBox="0 0 17 21" fill="none" stroke="#eeedf6" strokeWidth="1.600">
            <rect x="1.500" y="9" width="14" height="10.500" rx="2" />
            <path d="M4 9V5.500a4.500 4.500 0 0 1 9 0V9" />
          </svg>
          <svg className="ml-[17px] h-[13px] w-[19px]" viewBox="0 0 19 13" fill="none" stroke="#eeedf6" strokeWidth="1.500" strokeLinecap="round">
            <path d="M1 3h9M9 10h9" />
            <circle cx="15" cy="3" r="2.100" />
            <circle cx="4" cy="10" r="2.100" />
          </svg>
          <span className="ml-[13px] mt-[3px] font-['Open_Sans','Noto_Sans',sans-serif] text-[16px] tracking-[0.120px] text-[#85838f]">
            https://web.4b7d704f68.<span className="text-white">cfloat.app</span>
          </span>
          <svg className="ml-auto h-[21px] w-[21px]" viewBox="0 0 21 21" fill="none" stroke="#f2f1f8" strokeWidth="1.600" strokeLinejoin="round">
            <path d="M10.500 1.300l2.800 6 6.400.8-4.700 4.500 1.200 6.500-5.700-3.200-5.700 3.200L6 12.600 1.300 8.100l6.400-.8z" />
          </svg>
        </div>
        <div className="ml-auto mb-px flex items-center gap-[25px] pr-[21px]">
          <svg className="h-[18px] w-[20px]" viewBox="0 0 20 18" fill="none" stroke="#f5f6fb" strokeWidth="1.700" strokeLinecap="round" strokeLinejoin="round">
            <path d="M3 1.500h14a1.500 1.500 0 0 1 1.500 1.500v5a8.500 8.500 0 0 1-17 0V3A1.500 1.500 0 0 1 3 1.500z" />
            <path d="M6 6.500l4 3.800 4-3.800" />
          </svg>
          <svg className="h-5 w-5" viewBox="0 0 20 20" fill="none" stroke="#f5f6fb" strokeWidth="1.600">
            <circle cx="10" cy="10" r="8.700" />
            <circle cx="10" cy="7.300" r="3.200" fill="#f5f6fb" stroke="none" />
            <path d="M4.500 11.500h11c-.5 3-2.500 4.500-5.500 4.500s-5-1.500-5.500-4.500z" fill="#f5f6fb" stroke="none" />
          </svg>
          <svg className="h-5 w-5" viewBox="0 0 20 20" fill="none" stroke="#f5f6fb" strokeWidth="1.700" strokeLinejoin="round">
            <path d="M2.500 6.500h5V3.200a2.300 2.300 0 0 1 4.600 0v3.300h5.400v11.800h-15V14.500h2.300a2.200 2.200 0 0 0 0-4.300H2.500z" />
          </svg>
          <svg className="h-4 w-4" viewBox="0 0 16 16" stroke="#f5f6fb" strokeWidth="1.600" strokeLinecap="round">
            <path d="M1 2h14M1 7.500h14M1 13h14" />
          </svg>
        </div>
      </div>
    </header>
  );
}

function Magnifier({ className }: { className: string }) {
  return (
    <svg className={className} viewBox="0 0 28 28">
      <rect x=".5" y=".5" width="27" height="27" rx="2" fill="#cdd5dc" stroke="#b3c4d2" />
      <path d="M16 16l3 3" stroke="#d6a322" strokeWidth="3" />
      <path d="M18.500 18.500l6 6" stroke="#233038" strokeWidth="4.500" />
      <circle cx="11.500" cy="11" r="7.800" fill="#4cc5ee" stroke="#3f4d56" strokeWidth="1.600" />
      <path d="M5.500 9a6.500 6.500 0 0 1 12 0c-3 2-8 2-12 0z" fill="#8fdff7" opacity=".7" />
    </svg>
  );
}

function Mouse({ fill }: { fill: string }) {
  return (
    <path
      fill={fill}
      d="M0 0l9 5c2-1 5-1.300 8-1L18.500 1.500l1.500 1.300L22.300 1l.5 3.300 2.600 2.700-2.200 1.500-2 4.500h-2.200l-.8-2-3 .3v2H8.600L7.500 11l-1 1V7.500L0 1.200z"
    />
  );
}

function Panel() {
  return (
    <div className="relative z-10 flex h-[34px] shrink-0 items-stretch overflow-hidden border-b-2 border-[#b9b4ae] bg-[#f6f5f3] text-[#43494b]">
      <div className="flex w-[130px] items-center">
        <svg className="ml-[3px] h-5 w-[19px]" viewBox="0 0 19 20">
          <path d="M1 3.500L4 .5l5.500 5L15 .5l3.500 3-5 6.500 5 6-3.500 4-5.500-5-5.500 5-3.500-4 5-6z" fill="#10a7dc" />
          <path d="M3 5.500l4 1.500h5l1-2 4 3-1.500 5-3 1.500-6 .5-2-2z" fill="#0c0d0d" />
        </svg>
        <span className="ml-[3px] pt-px text-[15.500px] tracking-[0.300px]">Applications</span>
        <svg className="ml-[3px] h-[13px] w-[6px]" viewBox="0 0 6 13" stroke="#85878a">
          <path d="M1.500 1H6M0 4.500h4.500M1.500 8H6M0 11.500h4.500" />
        </svg>
      </div>
      <div className="flex w-[250px] items-center rounded-[4px] bg-[#d7d2cd]">
        <Magnifier className="ml-[4px] h-[21px] w-[21px]" />
        <span className="ml-[11px] pt-px text-[15.500px] tracking-[0.320px]">Application Finder</span>
      </div>
      <div className="ml-auto flex w-[256px] gap-px bg-[#e8e7e5]">
        <div className="flex w-[62px] items-center justify-center bg-[#807b75]">
          <div className="h-[19px] w-[24px] border-2 border-[#505352] bg-[#cbc7c2]" />
        </div>
        <div className="w-[63px] bg-[#aeadab]" />
        <div className="w-[63px] bg-[#aeadab]" />
        <div className="flex-1 bg-[#aeadab]" />
      </div>
      <div className="flex w-[106px] flex-col items-center justify-center pl-[10px] text-[12.500px] leading-[14px] tracking-[0.150px]">
        <span className="h-[14px] translate-y-[0.500px] overflow-hidden">2024-01-05</span>
        <span className="h-[14px] overflow-hidden">14:15</span>
      </div>
      <span className="flex w-[25px] items-center overflow-hidden whitespace-nowrap pt-px text-[15.500px]">abc</span>
    </div>
  );
}

const shadowText = "text-[15.500px] tracking-[0.400px] text-[#eeeff1] [text-shadow:1px_1px_2px_#000,0_0_2px_#000]";

function DesktopIcons() {
  return (
    <>
      <div className="absolute left-px top-[33px] flex w-[172px] flex-col items-center">
        <svg className="h-[54px] w-[54px] drop-shadow" viewBox="0 0 54 54">
          <defs>
            <linearGradient id="disk" x1="0" y1="0" x2="0" y2="1">
              <stop offset="0" stopColor="#efefef" />
              <stop offset="1" stopColor="#bababa" />
            </linearGradient>
          </defs>
          <rect x=".5" y=".5" width="53" height="53" rx="3" fill="#d5d5d5" stroke="#8c8c8c" />
          <rect x="3.500" y="3.500" width="47" height="39" rx="4" fill="url(#disk)" stroke="#8a8a8a" />
          <path d="M1 44.500h52" stroke="#f0f0f0" />
          <path d="M31 46v5M34 46v5M37 46v5M40 46v5M43 46v5M46 46v5" stroke="#404040" strokeWidth="1.500" />
          <circle cx="8.500" cy="49" r="2" fill="#5dbb3b" stroke="#47743a" strokeWidth=".8" />
        </svg>
        <span className={"mt-[12px] -translate-x-px " + shadowText}>File System</span>
      </div>
      <div className="absolute left-px top-[186px] flex w-[173px] flex-col items-center">
        <svg className="h-[54px] w-[54px] drop-shadow" viewBox="0 0 54 54">
          <defs>
            <linearGradient id="folder" x1="0" y1="0" x2="0" y2="1">
              <stop offset="0" stopColor="#dfc191" />
              <stop offset="1" stopColor="#c2924f" />
            </linearGradient>
          </defs>
          <path d="M3 6V2.500Q3 .5 5 .5h14l3 3h27q2 0 2 2V8H3z" fill="#d3a868" />
          <rect x=".5" y="5.500" width="53" height="48" rx="3" fill="url(#folder)" stroke="#b98b4d" />
          <path d="M2 6.500h50" stroke="#ecd5ae" />
          <path d="M27 16L12.500 31H16v12.500h23V31h3L35.500 24.500V19.500H33v2.500z" fill="#b38543" />
        </svg>
        <span className={"mt-[12px] -translate-x-px " + shadowText}>Home</span>
      </div>
      <div className="absolute -left-[6px] top-[239px] h-[82px] w-[21px] rounded-[8px] border-[3px] border-[#a6a6a8] bg-[#111116]">
        <svg className="h-full w-full" viewBox="0 0 15 76">
          <path d="M6 7v1M11 7v1M6 13v1M11 13v1M11 19v1M6 56v1M11 56v1M11 50v1M6 62v1M11 62v1" stroke="#45454b" strokeWidth="1.500" />
          <path d="M3 33l5.500 5L3 43z" fill="#fff" />
        </svg>
      </div>
    </>
  );
}

function AppIcon({ name }: { name: string }) {
  switch (name) {
    case "About Xfce":
      return (
        <svg className="h-10 w-10" viewBox="0 0 40 40">
          <path d="M20 1l6 12.500L39.800 15.500 30 25l3.500 14.500L20 33.500 6.500 39.500l3.500-14.500L.2 15.500 14 13.500z" fill="#b88a00" />
          <path d="M20 .5l6 12.500L39.800 15 30 23.500l3 14L20 31.500 7 37.500l3-14L.2 15 14 13z" fill="#fbdb06" />
          <g transform="translate(10.500 15.500) scale(.75)"><Mouse fill="#a87400" /></g>
        </svg>
      );
    case "Accessibility":
      return (
        <svg className="h-[38px] w-[38px]" viewBox="0 0 38 38">
          <rect x=".5" y="1" width="37" height="37" rx="3" fill="#077ea8" />
          <rect x=".5" y=".5" width="37" height="36" rx="3" fill="#08a9e0" />
          <circle cx="19" cy="9.500" r="3.700" fill="#fff" />
          <path d="M8.500 13.500l7 1h7l7-1v2.300l-7 2v5l3.500 9.500h-3.200L19 25l-3.800 7.300H12L15.500 23v-5.200l-7-2z" fill="#fff" />
        </svg>
      );
    case "Appearance":
      return (
        <svg className="h-[38px] w-[38px]" viewBox="0 0 38 38">
          <g>
            <path d="M11 36V28h7v8z" fill="#085a79" /><path d="M17 28h6v8h-6z" fill="#0987b5" /><path d="M23 28h5v8h-5z" fill="#18b0e5" />
            <path d="M28 28h4v8h-4z" fill="#83d8f4" /><path d="M32 28h5v8h-5z" fill="#bfe9f7" />
          </g>
          <g transform="rotate(-31 8 33)"><path d="M8 29h9v8H8z" fill="#2e760d" /><path d="M16 29h6v8h-6z" fill="#57b018" /><path d="M22 29h6v8h-6z" fill="#72d62c" /><path d="M28 29h4v8h-4z" fill="#b1ef7e" /><path d="M32 29h5v8h-5z" fill="#d6f7bc" /></g>
          <g transform="rotate(-60 7 32)"><path d="M8 28h9v8H8z" fill="#a47906" /><path d="M16 28h6v8h-6z" fill="#dba90b" /><path d="M22 28h5v8h-5z" fill="#fbd906" /><path d="M27 28h6v8h-6z" fill="#f9e88f" /><path d="M33 28h4v8h-4z" fill="#f7f1ca" /></g>
          <path d="M1 2h9v5H1z" fill="#efb2a7" /><path d="M1 7h9v5H1z" fill="#ec8e7c" /><path d="M1 12h9v6H1z" fill="#e8492f" />
          <path d="M1 18h9v5H1z" fill="#c62b0c" /><path d="M1 23h9v6H1z" fill="#7d1d09" /><path d="M1 29h9v7H1z" fill="#e4e6e7" />
          <path d="M10 29l4 7h-4z" fill="#5b4c2b" />
          <circle cx="5" cy="33" r="1.700" fill="#fff" />
        </svg>
      );
    case "Application Finder":
      return (
        <svg className="h-[38px] w-[38px]" viewBox="0 0 38 38">
          <rect x=".5" y=".5" width="37" height="37" rx="3" fill="#d0d4d8" stroke="#b5babf" />
          <g fill="#72d4f2">
            <path d="M3 3h7v7H3zM11.500 3h7v7h-7zM20 3h7v7h-7zM28.500 3h7v7h-7zM3 11.500h7v6H3zM28.500 11.500h7v6h-7zM3 19h7v6H3zM3 27h7v7H3zM11.500 27h7v7h-7z" />
          </g>
          <path d="M24 23l4 4" stroke="#d2a332" strokeWidth="3" />
          <path d="M26.500 26l6.500 6.500" stroke="#26323a" strokeWidth="4" strokeLinecap="round" />
          <circle cx="16.500" cy="15" r="11" fill="#8adcf5" stroke="#3b4851" strokeWidth="1.500" />
          <path d="M8 20a10 10 0 0 0 17 0c-4-3-13-3-17 0z" fill="#52c6ee" />
        </svg>
      );
    case "Bulk Rename":
      return (
        <svg className="h-10 w-10" viewBox="0 0 40 40">
          <rect x="15.500" y="17" width="9" height="23" rx="3" fill="#a5681b" stroke="#74500f" strokeWidth=".7" />
          <rect x="2.500" y="1" width="35" height="22" rx="3" fill="#5f7480" />
          <rect x="2.500" y=".5" width="35" height="19" rx="3" fill="#a9b4bb" />
          <g fill="none" stroke="#e2e6e8" strokeWidth="1.300">
            <path d="M7 9.500c2-3 5-2.500 5.500.5s-3 4.500-5 3-.5-4 2-3c3 1.500 4 3 6.500 3.500" />
            <path d="M33 9.500c-2-3-5-2.500-5.500.5s3 4.500 5 3 .5-4-2-3c-3 1.500-4 3-6.500 3.500" />
            <path d="M20 4c-3 4 3 5 4 9-3 1.500-5 1.500-8 0 1-4 7-5 4-9z" />
          </g>
          <path d="M13 25l14 1.500M27 27L10 32.500M17 29l9-1.500" stroke="#e8441d" strokeWidth="1.700" />
        </svg>
      );
    case "Default Applications":
      return (
        <svg className="h-[38px] w-[38px]" viewBox="0 0 38 38">
          <path d="M19 1H4Q.5 1 .5 4.500V19H19z" fill="#ca290a" />
          <path d="M19 1h15q3.500 0 3.500 3.500V19H19z" fill="#55a60b" />
          <path d="M.5 19H19v18.500H4Q.5 37.500.5 34z" fill="#0a658c" />
          <path d="M19 19h18.500v15q0 3.500-3.500 3.500H19z" fill="#7b359b" />
          <g fill="none" strokeWidth="1.200">
            <circle cx="10" cy="10" r="3.800" stroke="#f3a292" /><path d="M8 9l3-1 1 2-2 3" stroke="#f3a292" />
            <circle cx="28" cy="10" r="3.800" stroke="#b9ee8c" /><circle cx="28" cy="10" r="1.500" stroke="#b9ee8c" />
            <path d="M6 24h8v8H6zM8 26l2 2-2 2M11 30h2" stroke="#7cc5df" />
            <path d="M24.500 23.500h7v9h-7zM25 26.500h6M25 29.500h6M28 26v6" stroke="#d39ae8" />
          </g>
        </svg>
      );
    default:
      return (
        <svg className="h-10 w-10" viewBox="0 0 40 40">
          <path d="M12.500 28h15v8q0 1.500-2 1.500h-11q-2 0-2-1.500z" fill="#c3cbd1" />
          <path d="M12.500 28h15v4h-15z" fill="#919ba3" />
          <rect x="1" y="1" width="38" height="26.500" rx="1" fill="#3d5564" />
          <rect x="2.500" y="2.500" width="35" height="23.500" fill="#08aae1" />
          <g transform="translate(7.500 8) scale(.92)"><Mouse fill="#050505" /></g>
          <path d="M38 18v8.500h-8z" fill="#304653" /><path d="M38 18l-8 8.500V19z" fill="#cdeef8" />
        </svg>
      );
  }
}

const apps = [
  { name: "About Xfce", detail: "Information about the Xfce Desktop Environment", spacing: "tracking-[0.430px]" },
  { name: "Accessibility", detail: "Improve keyboard and mouse accessibility", spacing: "tracking-[0.270px]" },
  { name: "Appearance", detail: "Customize the look of your desktop", spacing: "tracking-[0.390px]" },
  { name: "Application Finder", detail: "Find and launch applications installed on your system", spacing: "tracking-[0.200px]" },
  { name: "Bulk Rename", detail: "Rename Multiple Files", spacing: "tracking-[0.350px]" },
  { name: "Default Applications", detail: "Associate preferred applications with MIME types", spacing: "tracking-[0.360px]" },
  { name: "Desktop", detail: "Set desktop background and menu and icon behavior", spacing: "tracking-[0.290px]" },
];

function FinderWindow() {
  return (
    <div className="absolute left-[598px] top-[206px] flex h-[569px] w-[737px] flex-col overflow-hidden rounded-t-[7px] border border-[#a9a49f] bg-[#f6f5f3] shadow-[0_3px_14px_rgba(0,0,0,.6)]">
      <div className="flex h-[35px] shrink-0 items-center bg-[#dad6d2]">
        <Magnifier className="ml-[5px] h-[27px] w-[27px]" />
        <span className="ml-[224px] -mt-px w-[142px] whitespace-nowrap text-[15px] font-bold tracking-[0.130px] text-[#3b4346]">Application Finder</span>
        <div className="ml-auto flex items-center gap-[16px] pr-[12px]">
          <svg className="h-[13px] w-[13px]" viewBox="0 0 13 13" fill="none" stroke="#2e3538" strokeWidth="2.600"><path d="M1.500 9.500l5-5 5 5" /></svg>
          <svg className="h-[13px] w-[13px]" viewBox="0 0 13 13" stroke="#2e3538" strokeWidth="2.400"><path d="M1 10.500h11" /></svg>
          <svg className="h-[13px] w-[13px]" viewBox="0 0 13 13" fill="none" stroke="#2e3538" strokeWidth="2.200"><path d="M1.600 1.600h9.800v9.800H1.600z" /></svg>
          <svg className="h-[13px] w-[13px]" viewBox="0 0 13 13" stroke="#2e3538" strokeWidth="2.800"><path d="M1.500 1.500l10 10M11.500 1.500l-10 10" /></svg>
        </div>
      </div>
      <div className="flex min-h-0 flex-1 flex-col pb-[12px] pl-[12px] pr-[13px] pt-[19px]">
        <div className="flex h-[43px] items-center">
          <svg className="ml-[10px] h-[40px] w-[40px] -translate-y-[3px]" viewBox="0 0 40 40" fill="none" stroke="#bebebd">
            <circle cx="14.500" cy="14.500" r="11.800" strokeWidth="4.200" />
            <path d="M23 23l4 4" strokeWidth="4" />
            <path d="M27.500 27.500L36 36" strokeWidth="6.500" strokeLinecap="round" />
          </svg>
          <div className="ml-[18px] flex h-[43px] flex-1 items-center justify-between rounded-[6px] border-2 border-[#3584e4] bg-white pl-[17px] pr-[12px] shadow-[inset_0_0_0_1px_#a9cbf4]">
            <div className="h-6 w-px bg-[#3b4040]" />
            <svg className="h-[13px] w-[13px]" viewBox="0 0 13 13" fill="#5b6263"><path d="M6.500 0L13 8H9v5H4V8H0z" /></svg>
          </div>
        </div>
        <div className="relative mt-[12px] flex h-[395px] shrink-0 flex-col overflow-hidden border border-[#cfcac5] bg-white">
          {apps.map(({ name, detail, spacing }) => (
            <div key={name} className="flex h-[55px] shrink-0 items-center">
              <div className="ml-[5px] mt-[2px] flex w-[40px] justify-center">
                <AppIcon name={name} />
              </div>
              <div className="ml-[8px] mt-[3px] flex flex-col whitespace-nowrap text-[15.600px] leading-[24px]">
                <span className="font-bold tracking-[0.450px] text-[#0b0b0b]">{name}</span>
                <span className={"text-[#232323] " + spacing}>{detail}</span>
              </div>
            </div>
          ))}
          <div className="absolute right-[1px] top-[4px] h-[69px] w-[4px] rounded bg-[#f4f4f3]" />
        </div>
        <div className="mt-[8px] flex items-center justify-between text-[15.600px]">
          <div className="flex h-[43px] w-[141px] items-center rounded-[6px] border border-[#c9c4be] bg-gradient-to-b from-[#f6f5f4] to-[#eae8e6] pl-[11px] text-[#4c5254] shadow-sm">
            <svg className="h-5 w-5" viewBox="0 0 20 20">
              <rect x=".5" y=".5" width="19" height="19" rx="1.500" fill="#555856" stroke="#8c8e8b" />
              <path d="M4 16V9q0-5 5-5h7v3h-4l4 3v6h-4l-2-4-3 4z" fill="#8e918d" />
              <circle cx="9.500" cy="9" r="2.600" fill="#cfd0cd" />
              <path d="M4 16c1-6 5-8 8-8M10 16c0-3 3-4 6-4" fill="none" stroke="#262826" strokeWidth="1.600" />
            </svg>
            <span className="ml-[3px] tracking-[0.550px]">Preferences</span>
          </div>
          <div className="flex h-[43px] w-[103px] items-center rounded-[6px] border border-[#d3cfcb] bg-[#faf9f8] pl-[13px] text-[#9b9fa0]">
            <svg className="h-[18px] w-[18px]" viewBox="0 0 18 18" fill="none" stroke="#929595">
              <circle cx="9" cy="9" r="4.700" strokeWidth="4.400" />
              <circle cx="9" cy="9" r="7.700" strokeWidth="2.600" strokeDasharray="3 3.050" />
            </svg>
            <span className="ml-[4px] tracking-[0.300px]">Launch</span>
          </div>
        </div>
      </div>
    </div>
  );
}

export default function App() {
  return (
    <div className="flex h-[1022px] w-[1918px] flex-col overflow-hidden font-['Noto_Sans','Open_Sans',sans-serif]">
      <Browser />
      <Panel />
      <main className="relative flex-1 overflow-hidden bg-[#1d2638]">
        <Wallpaper />
        <DesktopIcons />
        <FinderWindow />
        <div className="absolute bottom-0 left-[769px] h-[5px] w-[382px] border border-b-0 border-[#bdb9b5] bg-[#f6f5f3]" />
      </main>
    </div>
  );
}
